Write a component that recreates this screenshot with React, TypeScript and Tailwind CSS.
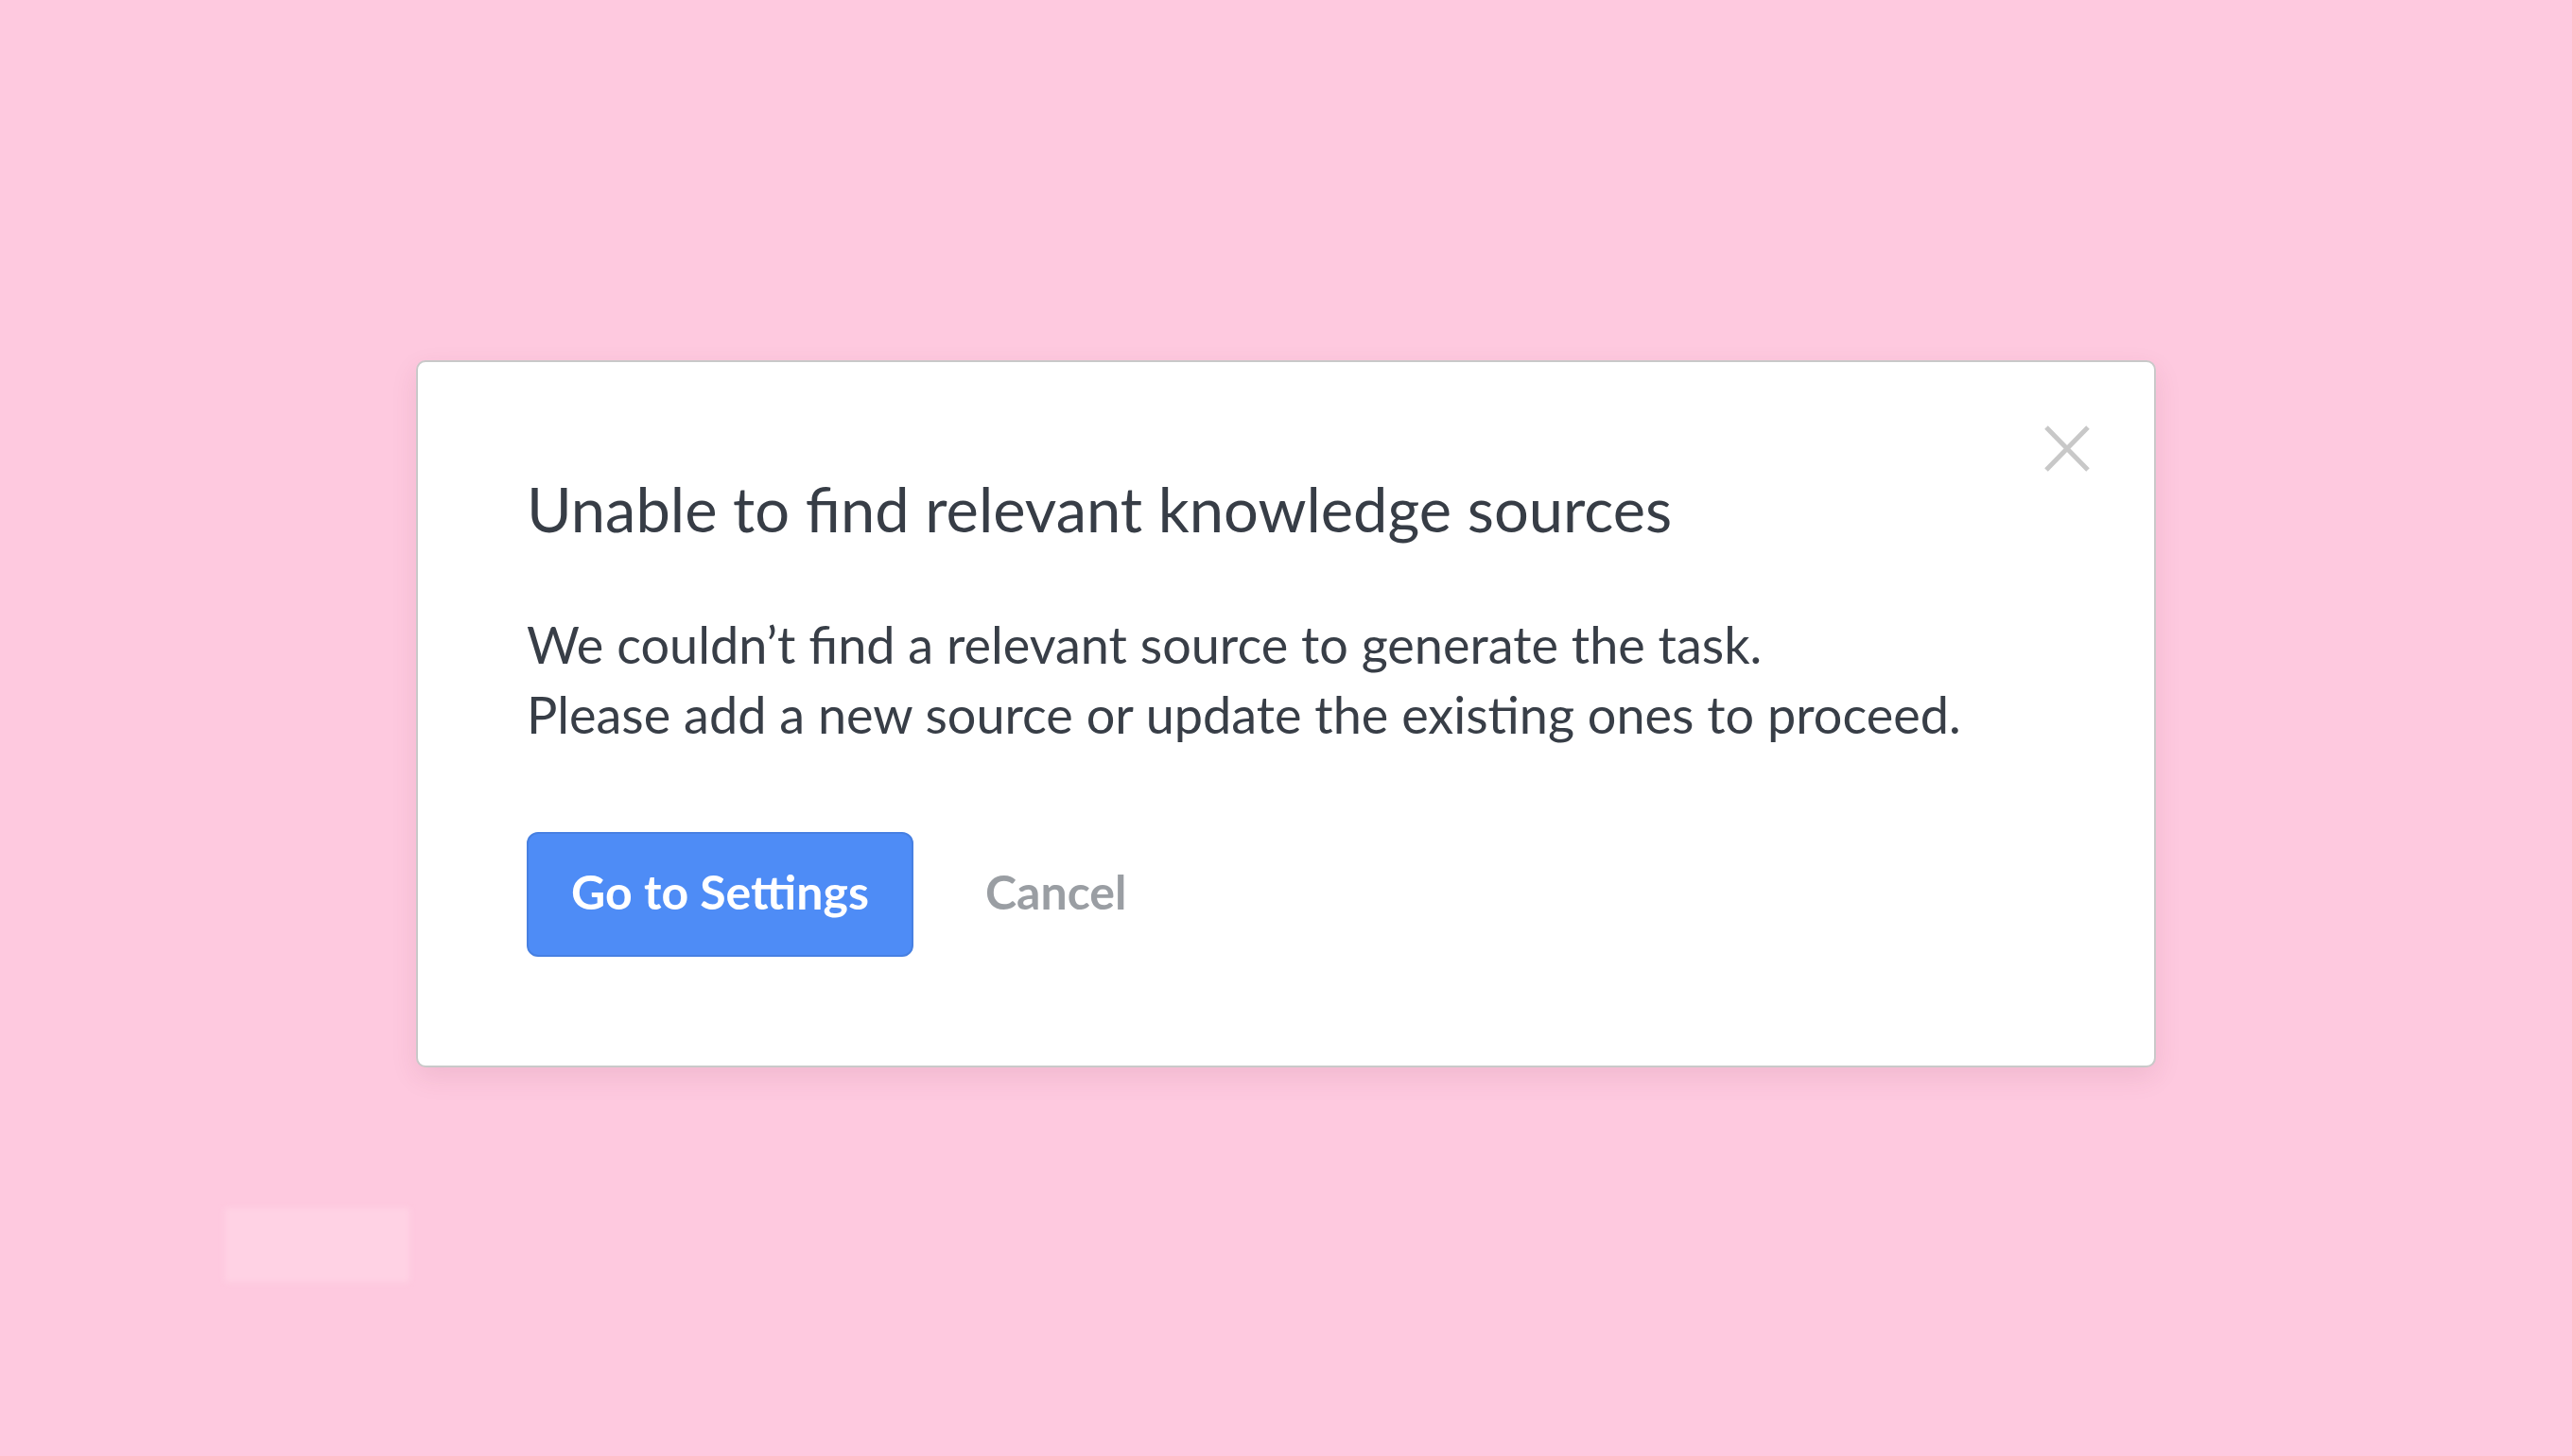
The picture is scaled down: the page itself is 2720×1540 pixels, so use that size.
const CloseIcon = () => (
  <svg width="48" height="49" viewBox="0 0 48 49" fill="none">
    <path d="M2 2 46 47M46 2 2 47" stroke="currentColor" strokeWidth="5" />
  </svg>
);

const SourceMissingDialog = () => {
  return (
    <section className="relative box-border w-[1840px] h-[748px] ml-[440px] mt-[381px] rounded-[10px] border-2 border-[#c9c9c9] bg-white pl-[115px] pt-[123px] shadow-[0_10px_28px_rgba(120,40,70,0.10)]">
      {/* close */}
      <button className="absolute right-[68px] top-[67px] p-0 text-[#c8c8c8]">
        <CloseIcon />
      </button>

      <h2 className="text-[65px] leading-[65px] font-normal text-[#373d46]">
        Unable to find relevant knowledge sources
      </h2>

      <div className="mt-[74px] text-[54px] leading-[74px] text-[#383e47]">
        <p>We couldn’t find a relevant source to generate the task.</p>
        <p>Please add a new source or update the existing ones to proceed.</p>
      </div>

      <div className="mt-[87px] flex items-center gap-[76px]">
        <button className="box-border w-[409px] h-[132px] pb-[6px] rounded-[12px] border-2 border-[#4780e2] bg-[#4e8cf6] text-[50px] font-bold text-white">
          Go to Settings
        </button>
        <button className="pb-[6px] text-[50px] font-bold text-[#9a9ea3]">Cancel</button>
      </div>
    </section>
  );
};

export default function App() {
  return (
    <div className="w-[2720px] h-[1540px] overflow-hidden bg-[#fec9df] font-['Lato',sans-serif] flex flex-col">
      <SourceMissingDialog />
      {/* faint placeholder block under the modal */}
      <div className="ml-[238px] mt-[149px] w-[195px] h-[78px] bg-[#ffd2e4] blur-[3px]" />
    </div>
  );
}
